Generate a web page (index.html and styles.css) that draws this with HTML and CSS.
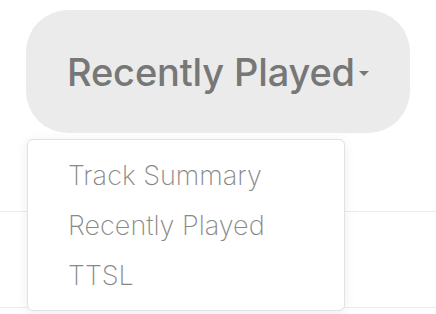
FILE: index.html
```html
<!DOCTYPE html>
<html>
<head>
<meta charset="utf-8">
<link rel="stylesheet" href="styles.css">
</head>
<body>
<div class="page">
  <div class="header">
    <button class="toggle">Recently Played<span class="caret"></span></button>
  </div>
  <div class="rows">
    <div class="row first"></div>
    <div class="row second"></div>
  </div>
  <ul class="menu">
    <li>Track Summary</li>
    <li>Recently Played</li>
    <li>TTSL</li>
  </ul>
</div>
</body>
</html>
```
FILE: styles.css
```css
html, body {
  margin: 0;
  padding: 0;
  background: #fff;
}
.page {
  position: relative;
  width: 436px;
  height: 314px;
  overflow: hidden;
  font-family: "Inter", "Liberation Sans", sans-serif;
}
.header {
  padding: 10px 0 0 26px;
  height: 129px;
  box-sizing: border-box;
}
.toggle {
  display: flex;
  align-items: center;
  width: 384px;
  height: 123px;
  border: none;
  border-radius: 42px;
  background: #ebebeb;
  color: #777;
  font-family: inherit;
  font-size: 38px;
  font-weight: 500;
  padding: 0 0 0 41px;
  box-sizing: border-box;
  letter-spacing: -0.15px;
}
.caret {
  display: inline-block;
  width: 0;
  height: 0;
  margin-left: 4px;
  margin-top: 4px;
  border-left: 5px solid transparent;
  border-right: 5px solid transparent;
  border-top: 5px solid #777;
}
.rows {
  display: flex;
  flex-direction: column;
}
.row {
  border-bottom: 1px solid #ececec;
}
.row.first {
  height: 82px;
}
.row.second {
  height: 95px;
}
.menu {
  position: absolute;
  left: 27px;
  top: 139px;
  width: 318px;
  height: 172px;
  margin: 0;
  padding: 13px 0 0 0;
  box-sizing: border-box;
  list-style: none;
  background: #fff;
  border: 1px solid #e2e2e2;
  border-radius: 6px;
  box-shadow: 0 2px 12px rgba(0,0,0,0.08);
}
.menu li {
  height: 50px;
  line-height: 46px;
  padding-left: 40px;
  font-size: 27px;
  font-weight: 250;
  color: #888;
}
```
